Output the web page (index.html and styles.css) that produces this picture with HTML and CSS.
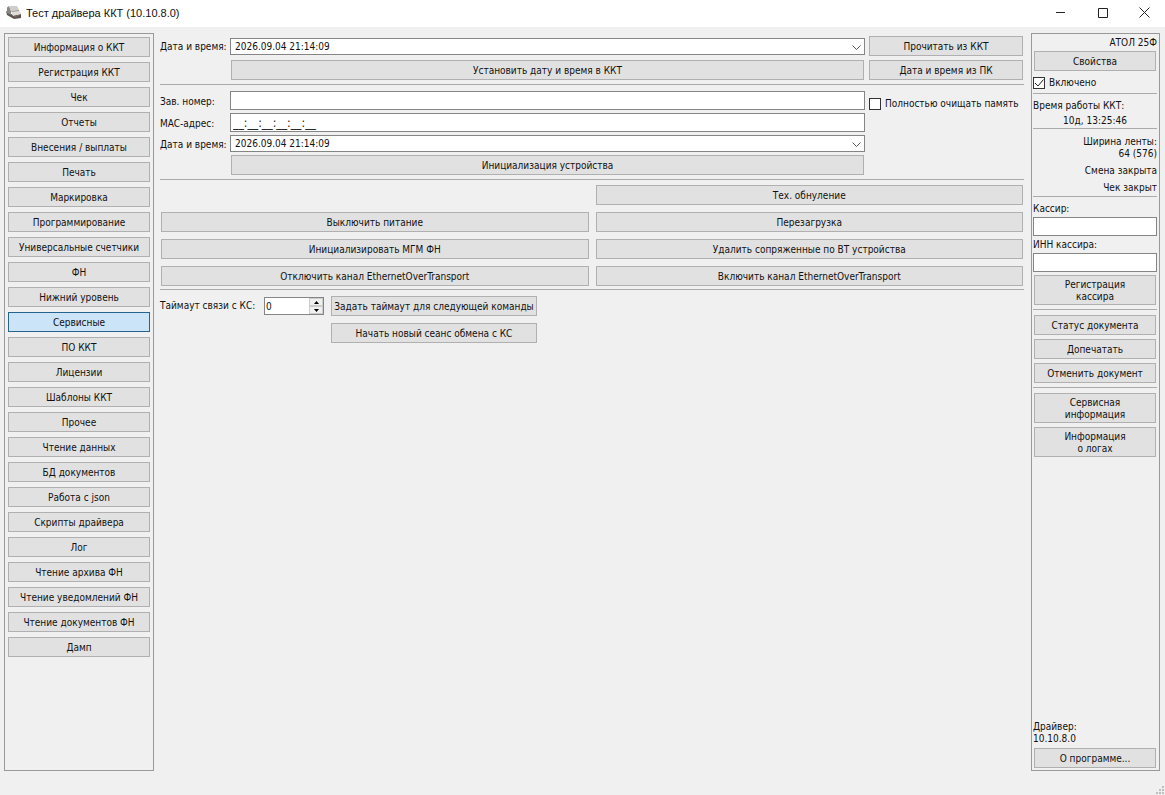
FILE: index.html
```html
<!DOCTYPE html>
<html lang="ru">
<head>
<meta charset="utf-8">
<title>Тест драйвера ККТ (10.10.8.0)</title>
<link rel="stylesheet" href="styles.css">
</head>
<body>
<header class="titlebar">
  <svg class="app-icon" width="16" height="16" viewBox="0 0 16 16">
    <path d="M0 6 1 10 8 14 15 13V9L7 10Z" fill="#5b5654"/>
    <path d="M1 2.500 3 1 5 6 5 10 1 8Z" fill="#8b8684"/>
    <path d="M3 1 11 1 13 5 5 6Z" fill="#cfcdcc"/>
    <path d="M5 6 13 5 15 9 7 11Z" fill="#e0dcd9"/>
    <path d="M5.500 6.500 13 5.500" stroke="#9a9593"/>
    <path d="M8 11.500 13 10.500" stroke="#8d6a5c"/>
  </svg>
  <h1 class="title">Тест драйвера ККТ (10.10.8.0)</h1>
  <div class="window-controls">
    <button class="window-button" aria-label="Свернуть"><svg width="11" height="11" viewBox="0 0 11 11"><path d="M1 5.500H10"/></svg></button>
    <button class="window-button" aria-label="Развернуть"><svg width="11" height="11" viewBox="0 0 11 11"><path d="M1.500 1.500H10.500V10.500H1.500Z"/></svg></button>
    <button class="window-button" aria-label="Закрыть"><svg width="11" height="11" viewBox="0 0 11 11"><path d="M.5.500 10.500 10.500M10.500.500.500 10.500"/></svg></button>
  </div>
</header>
<div class="workspace">
  <nav class="panel sidebar">
    <button class="btn">Информация о ККТ</button>
    <button class="btn">Регистрация ККТ</button>
    <button class="btn">Чек</button>
    <button class="btn">Отчеты</button>
    <button class="btn">Внесения / выплаты</button>
    <button class="btn">Печать</button>
    <button class="btn">Маркировка</button>
    <button class="btn">Программирование</button>
    <button class="btn">Универсальные счетчики</button>
    <button class="btn">ФН</button>
    <button class="btn">Нижний уровень</button>
    <button class="btn btn-active">Сервисные</button>
    <button class="btn">ПО ККТ</button>
    <button class="btn">Лицензии</button>
    <button class="btn">Шаблоны ККТ</button>
    <button class="btn">Прочее</button>
    <button class="btn">Чтение данных</button>
    <button class="btn">БД документов</button>
    <button class="btn">Работа с json</button>
    <button class="btn">Скрипты драйвера</button>
    <button class="btn">Лог</button>
    <button class="btn">Чтение архива ФН</button>
    <button class="btn">Чтение уведомлений ФН</button>
    <button class="btn">Чтение документов ФН</button>
    <button class="btn">Дамп</button>
  </nav>
  <main class="content">
    <section class="form">
      <label for="clock">Дата и время:</label>
      <div class="combo">
        <select id="clock"><option>2026.09.04 21:14:09</option></select>
        <svg class="chevron" width="9" height="6" viewBox="0 0 9 6"><path d="M.5.500 4.500 4.500 8.500.500"/></svg>
      </div>
      <button class="btn">Прочитать из ККТ</button>
      <button class="btn field-column">Установить дату и время в ККТ</button>
      <button class="btn">Дата и время из ПК</button>
    </section>
    <hr>
    <section class="form form-init">
      <label for="serial">Зав. номер:</label>
      <input class="text" id="serial" type="text">
      <label class="check check-low"><input type="checkbox"><svg class="tick" width="12" height="12" viewBox="0 0 12 12"><path d="M2 6 5 9 10.500 2.500"/></svg>Полностью очищать память</label>
      <label class="label-column" for="mac">MAC-адрес:</label>
      <input class="text text-mask" id="mac" type="text" value="__:__:__:__:__:__">
      <label class="label-column" for="init-clock">Дата и время:</label>
      <div class="combo">
        <select id="init-clock"><option>2026.09.04 21:14:09</option></select>
        <svg class="chevron" width="9" height="6" viewBox="0 0 9 6"><path d="M.5.500 4.500 4.500 8.500.500"/></svg>
      </div>
      <button class="btn field-column">Инициализация устройства</button>
    </section>
    <hr>
    <section class="actions">
      <button class="btn right-column">Тех. обнуление</button>
      <button class="btn">Выключить питание</button>
      <button class="btn">Перезагрузка</button>
      <button class="btn">Инициализировать МГМ ФН</button>
      <button class="btn">Удалить сопряженные по BT устройства</button>
      <button class="btn">Отключить канал EthernetOverTransport</button>
      <button class="btn">Включить канал EthernetOverTransport</button>
    </section>
    <hr>
    <section class="timeout">
      <label for="timeout">Таймаут связи с КС:</label>
      <div class="spin">
        <input id="timeout" type="text" inputmode="numeric" value="0">
        <div class="spin-buttons">
          <button aria-label="Больше"><svg width="5" height="3" viewBox="0 0 5 3"><path d="M0 3 2.500 0 5 3Z"/></svg></button>
          <button aria-label="Меньше"><svg width="5" height="3" viewBox="0 0 5 3"><path d="M0 0 2.500 3 5 0Z"/></svg></button>
        </div>
      </div>
      <button class="btn">Задать таймаут для следующей команды</button>
      <button class="btn last-column">Начать новый сеанс обмена с КС</button>
    </section>
  </main>
  <aside class="panel status">
    <p class="right">АТОЛ 25Ф</p>
    <button class="btn">Свойства</button>
    <label class="check"><input type="checkbox" checked><svg class="tick" width="12" height="12" viewBox="0 0 12 12"><path d="M2 6 5 9 10.500 2.500"/></svg>Включено</label>
    <hr>
    <div class="uptime">
      <p>Время работы ККТ:</p>
      <p class="center">10д, 13:25:46</p>
    </div>
    <hr>
    <div class="state right">
      <p>Ширина ленты:<br>64 (576)</p>
      <p>Смена закрыта</p>
      <p>Чек закрыт</p>
    </div>
    <hr>
    <div class="cashier">
      <label for="cashier">Кассир:</label>
      <input class="text" id="cashier" type="text">
      <label for="inn">ИНН кассира:</label>
      <input class="text" id="inn" type="text">
      <button class="btn btn-tall">Регистрация<br>кассира</button>
    </div>
    <hr>
    <div class="stack">
      <button class="btn">Статус документа</button>
      <button class="btn">Допечатать</button>
      <button class="btn">Отменить документ</button>
    </div>
    <hr>
    <div class="stack">
      <button class="btn btn-tall">Сервисная<br>информация</button>
      <button class="btn btn-tall">Информация<br>о логах</button>
    </div>
    <div class="about">
      <p>Драйвер:<br>10.10.8.0</p>
      <button class="btn">О программе...</button>
    </div>
  </aside>
</div>
<footer class="statusbar">
  <svg width="8" height="8" viewBox="0 0 8 8" fill="#bfbfbf"><path d="M6 0h2v2H6zM3 3h2v2H3zM6 3h2v2H6zM0 6h2v2H0zM3 6h2v2H3zM6 6h2v2H6z"/></svg>
</footer>
</body>
</html>
```
FILE: styles.css
```css
* { box-sizing: border-box; }

body {
  margin: 0;
  min-height: 100vh;
  display: flex;
  flex-direction: column;
  background: #f0f0f0;
  color: #111;
  font: 10px/12px "DejaVu Sans Condensed", "DejaVu Sans", sans-serif;
}

button, input, select { font: inherit; color: inherit; border-radius: 0; }
p { margin: 0; }
label { white-space: nowrap; }
hr { width: 100%; height: 1px; margin: 0; border: 0; background: #ababab; flex: none; }

.titlebar {
  display: flex;
  align-items: center;
  height: 27px;
  padding: 0 0 2px 6px;
  background: #fff;
}
.title { margin: 0 0 0 4px; font: 11px/16px "Liberation Sans", sans-serif; }
.window-controls { display: flex; margin-left: auto; }
.window-button {
  width: 42px;
  height: 25px;
  padding: 0;
  border: 0;
  background: none;
  display: flex;
  align-items: center;
  justify-content: center;
}
.window-button svg { fill: none; stroke: #222; }

.workspace {
  flex: 1;
  display: grid;
  grid-template-columns: 150px minmax(0, 1fr) 130px;
  column-gap: 6px;
  padding: 6px 5px 0 4px;
}
.panel { border: 1px solid #999; }

.btn {
  min-height: 20px;
  padding: 2px 1px 0;
  border: 1px solid #b0b0b0;
  background: #e1e1e1;
  white-space: nowrap;
}
.btn-active { border-color: #26638f; background: #cce4f7; }
.btn-tall { min-height: 30px; }

.sidebar { padding: 3px; display: grid; grid-auto-rows: 20px; gap: 5px; align-content: start; }

.content { display: flex; flex-direction: column; padding: 3px 0; }
.form {
  display: grid;
  grid-template-columns: 70px minmax(0, 1fr) 154px;
  row-gap: 4px;
  align-items: center;
  padding: 0 1px 4px 0;
}
.form .combo, .form > .text { margin-right: 4px; }
.form .field-column { grid-column: 2; margin: 0 5px 0 1px; }
.form > label { padding-top: 2px; }
.form-init { row-gap: 3px; padding-top: 6px; }
.label-column { grid-column: 1; }

.text {
  width: 100%;
  height: 19px;
  padding: 0 2px;
  border: 1px solid #858585;
  background: #fff;
}
.form > .text { width: auto; }
.text-mask { font-size: 12px; line-height: 17px; }
.combo { position: relative; height: 17px; }
.combo select {
  display: block;
  appearance: none;
  width: 100%;
  height: 17px;
  padding: 1px 20px 0 4px;
  border: 1px solid #858585;
  background: #fff;
}
.chevron { position: absolute; right: 4px; top: 7px; fill: none; stroke: #555; pointer-events: none; }

.check { position: relative; display: flex; align-items: center; gap: 4px; }
.check input {
  appearance: none;
  width: 12px;
  height: 12px;
  margin: 0;
  border: 1px solid #333;
  background: #fff;
}
.tick { position: absolute; left: 0; fill: none; stroke: #222; visibility: hidden; pointer-events: none; }
input:checked + .tick { visibility: visible; }
.check-low { align-self: end; }

.actions {
  display: grid;
  grid-template-columns: repeat(2, minmax(0, 1fr));
  gap: 7px;
  padding: 5px 1px 3px;
}
.right-column { grid-column: 2; }

.timeout {
  display: grid;
  grid-template-columns: 97px 60px 206px;
  gap: 7px;
  align-items: center;
  padding-top: 6px;
}
.last-column { grid-column: 3; }
.spin { display: flex; height: 18px; border: 1px solid #858585; background: #fff; }
.spin input { flex: 1; min-width: 0; border: 0; padding: 1px 1px 0; background: none; }
.spin-buttons { width: 14px; display: grid; grid-template-rows: 1fr 1fr; }
.spin-buttons button {
  padding: 0;
  border: 1px solid #ccc;
  background: #f0f0f0;
  display: flex;
  align-items: center;
  justify-content: center;
  min-height: 0;
}

.right { text-align: right; }
.center { text-align: center; }
.status { display: flex; flex-direction: column; margin-left: 1px; padding: 3px 2px 2px 1px; }
.status .btn { margin: 0 1px; flex: none; }
.status > .btn { margin-top: 2px; }
.status > .check { padding: 6px 0 4px; }
.status .tick { top: 6px; }
.uptime { display: grid; gap: 3px; padding: 6px 0 1px; }
.state { display: grid; gap: 5px; padding: 7px 0 2px; }
.cashier { display: grid; padding: 5px 0 4px; }
.cashier label { line-height: 14px; }
.cashier .text { margin: 1px 0 2px; }
.cashier .btn { margin-top: 1px; }
.stack { display: grid; gap: 4px; padding: 5px 0 4px; }
.about { display: grid; gap: 3px; margin-top: auto; }

.statusbar { display: flex; height: 24px; padding: 0 1px 1px; justify-content: flex-end; align-items: flex-end; }
```
